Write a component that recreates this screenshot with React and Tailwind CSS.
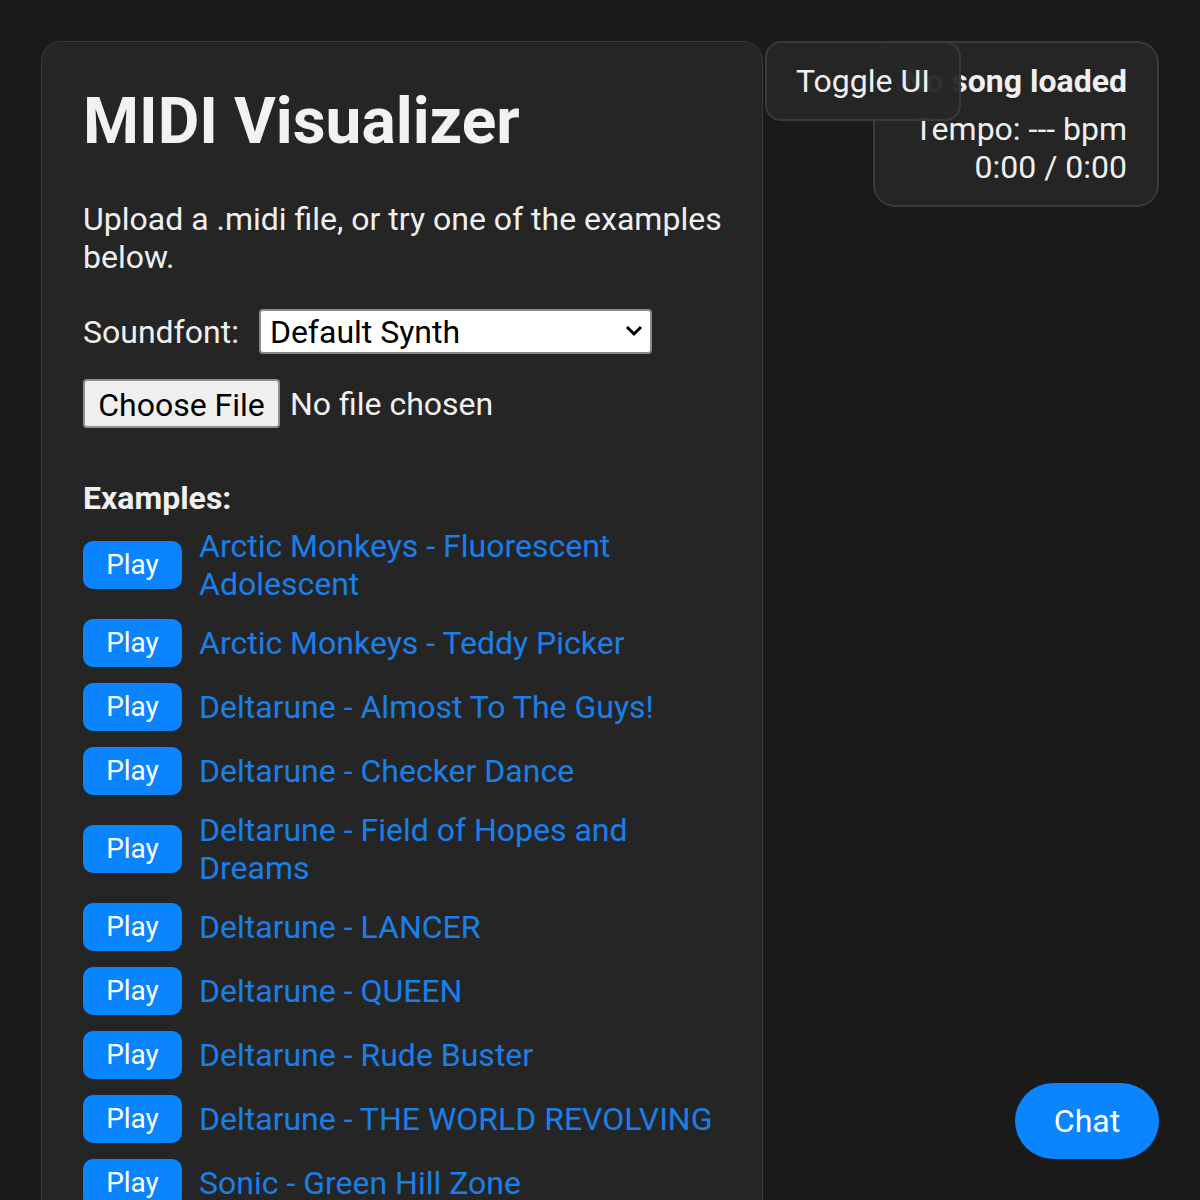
import { useState } from 'react';

const examples = [
  'Arctic Monkeys - Fluorescent Adolescent',
  'Arctic Monkeys - Teddy Picker',
  'Deltarune - Almost To The Guys!',
  'Deltarune - Checker Dance',
  'Deltarune - Field of Hopes and Dreams',
  'Deltarune - LANCER',
  'Deltarune - QUEEN',
  'Deltarune - Rude Buster',
  'Deltarune - THE WORLD REVOLVING',
  'Sonic - Green Hill Zone',
  'Sonic - Star Light Zone',
  'Undertale - Megalovania',
];

export default function App() {
  const [font, setFont] = useState('default');
  const [showUI, setShowUI] = useState(true);

  return (
    <div className="relative h-[1200px] overflow-hidden bg-[#1a1a1a] text-[#f0f0f0] font-['Roboto','Liberation_Sans',sans-serif]">
      <div className="p-[41px]">
        {showUI && (
          <div className="w-[722px] rounded-[20px] border border-[#3a3a3a] bg-[#252525] pl-[41px] pr-[34px] pt-[42px] pb-10">
            <h1 className="text-[64px] leading-[76px] font-bold text-[#f2f2f2]">MIDI Visualizer</h1>
            <p className="mt-[40px] text-[32px] leading-[38px]">Upload a .midi file, or try one of the examples below.</p>

            <div className="mt-[33px] flex items-center gap-[20px]">
              <label className="text-[32px] leading-[38px]">Soundfont:</label>
              <div className="relative">
                <select
                  value={font}
                  onChange={e => setFont(e.target.value)}
                  className="appearance-none w-[393px] h-[45px] rounded-[4px] border-2 border-[#8a8a8a] bg-white pl-[9px] text-[32px] leading-[38px] text-black"
                >
                  <option value="default">Default Synth</option>
                  <option value="piano">Acoustic Grand Piano</option>
                </select>
                <svg className="pointer-events-none absolute right-[9px] top-[15px]" width="18" height="14" viewBox="0 0 18 14">
                  <path d="M2 3 L9 10 L16 3" fill="none" stroke="#000" strokeWidth="3" />
                </svg>
              </div>
            </div>

            <div className="mt-[25px] flex items-center gap-[10px]">
              <button className="h-[49px] w-[197px] rounded-[4px] border-2 border-[#8f8f8f] bg-[#efefef] text-[32px] text-black">Choose File</button>
              <span className="text-[32px] leading-[38px]">No file chosen</span>
            </div>

            <h2 className="mt-[51px] text-[32px] leading-[38px] font-bold">Examples:</h2>

            <div className="mt-[10px] flex flex-col gap-4 pr-[7px]">
              {examples.map(name => (
                <div key={name} className="flex items-center gap-[17px]">
                  <button className="h-[48px] w-[99px] shrink-0 rounded-[10px] bg-[#0a84ff] text-[28px] text-white">Play</button>
                  <a href="#" className="text-[32px] leading-[38px] text-[#1a7fe8]">{name}</a>
                </div>
              ))}
            </div>
          </div>
        )}
      </div>

      <div className="absolute right-[41px] top-[41px] w-[286px] h-[166px] rounded-[22px] border-2 border-[#3a3a3a] bg-[#252525] px-[30px] pt-[19px] flex flex-col items-end text-[32px] leading-[38px] whitespace-nowrap">
        <div className="font-bold">No song loaded</div>
        <div className="mt-[10px]">Tempo: --- bpm</div>
        <div>0:00 / 0:00</div>
      </div>

      <button
        onClick={() => setShowUI(!showUI)}
        className="absolute left-[765px] top-[41px] w-[196px] h-[80px] rounded-[16px] border-2 border-[#3a3a3a] bg-[#262626]/95 text-[32px] text-[#f0f0f0]"
      >
        Toggle UI
      </button>

      <button className="absolute right-[41px] bottom-[41px] w-[144px] h-[76px] rounded-full bg-[#0a84ff] text-[32px] text-white">Chat</button>
    </div>
  );
}
